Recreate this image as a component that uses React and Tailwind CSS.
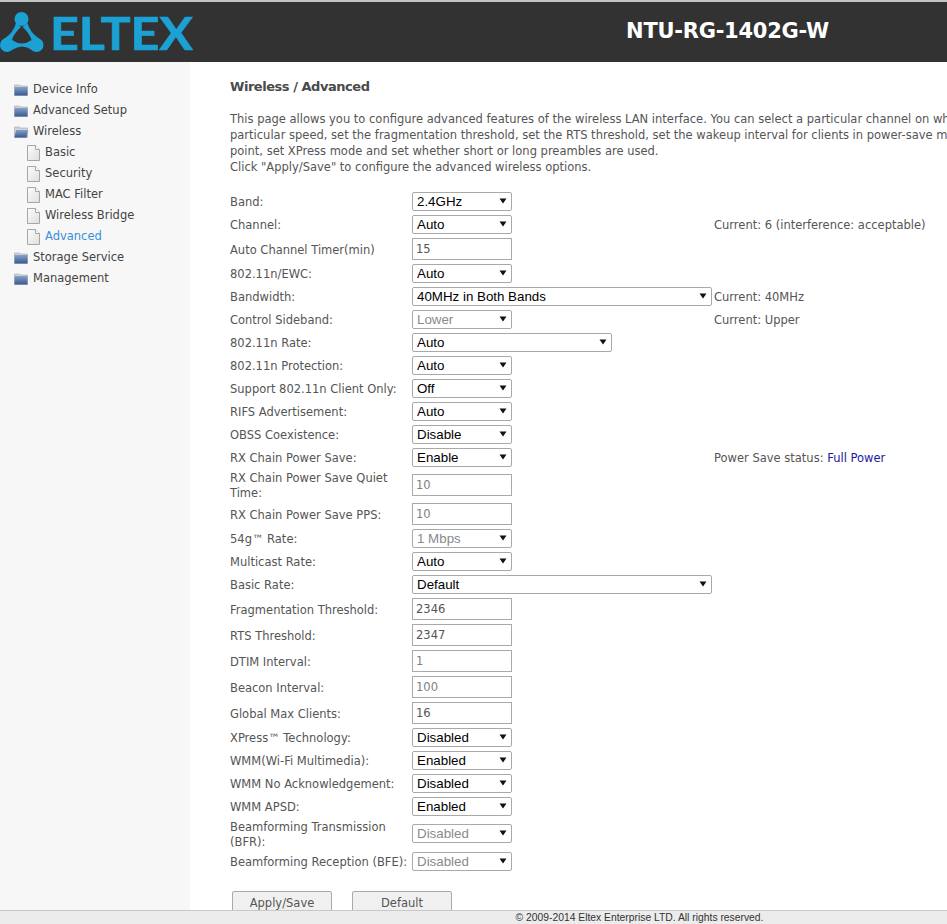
const NAV = [
  { t: "Device Info", k: "folder" },
  { t: "Advanced Setup", k: "folder" },
  { t: "Wireless", k: "open" },
  { t: "Basic", k: "doc" },
  { t: "Security", k: "doc" },
  { t: "MAC Filter", k: "doc" },
  { t: "Wireless Bridge", k: "doc" },
  { t: "Advanced", k: "doc", active: true },
  { t: "Storage Service", k: "folder" },
  { t: "Management", k: "folder" },
];

const ROWS = [
  { l: "Band:", s: "2.4GHz" },
  { l: "Channel:", s: "Auto", n: "Current: 6 (interference: acceptable)" },
  { l: "Auto Channel Timer(min)", i: "15" },
  { l: "802.11n/EWC:", s: "Auto" },
  { l: "Bandwidth:", s: "40MHz in Both Bands", w: "xl", n: "Current: 40MHz" },
  { l: "Control Sideband:", s: "Lower", d: true, n: "Current: Upper" },
  { l: "802.11n Rate:", s: "Auto", w: "lg" },
  { l: "802.11n Protection:", s: "Auto" },
  { l: "Support 802.11n Client Only:", s: "Off" },
  { l: "RIFS Advertisement:", s: "Auto" },
  { l: "OBSS Coexistence:", s: "Disable" },
  { l: "RX Chain Power Save:", s: "Enable", p: true },
  { l: "RX Chain Power Save Quiet Time:", i: "10", d: true, two: true },
  { l: "RX Chain Power Save PPS:", i: "10", d: true },
  { l: "54g™ Rate:", s: "1 Mbps", d: true },
  { l: "Multicast Rate:", s: "Auto" },
  { l: "Basic Rate:", s: "Default", w: "xl" },
  { l: "Fragmentation Threshold:", i: "2346" },
  { l: "RTS Threshold:", i: "2347" },
  { l: "DTIM Interval:", i: "1", d: true },
  { l: "Beacon Interval:", i: "100", d: true },
  { l: "Global Max Clients:", i: "16" },
  { l: "XPress™ Technology:", s: "Disabled" },
  { l: "WMM(Wi-Fi Multimedia):", s: "Enabled" },
  { l: "WMM No Acknowledgement:", s: "Disabled" },
  { l: "WMM APSD:", s: "Enabled" },
  { l: "Beamforming Transmission (BFR):", s: "Disabled", d: true, two: true },
  { l: "Beamforming Reception (BFE):", s: "Disabled", d: true },
];

function Folder({ open }) {
  return (
    <svg width="14" height="12" viewBox="0 0 14 12" className="shrink-0">
      <defs>
        <linearGradient id="fg" x1="0" y1="0" x2="0" y2="1">
          <stop offset="0" stopColor="#86a2cb" />
          <stop offset="1" stopColor="#38598f" />
        </linearGradient>
      </defs>
      <path d="M0.5 1h5l1 1h7v9.5h-13z" fill="#cfd2d6" stroke="#a4a8ae" strokeWidth="0.6" />
      <path d={open ? "M2 4h12l-1.5 7.5h-12z" : "M0.5 3h13v8.5h-13z"} fill="url(#fg)" />
    </svg>
  );
}

function Doc() {
  return (
    <svg width="13" height="16" viewBox="0 0 13 16" className="shrink-0">
      <defs>
        <linearGradient id="dg" x1="0" y1="0" x2="1" y2="1">
          <stop offset="0" stopColor="#fdfdfd" />
          <stop offset="1" stopColor="#dedede" />
        </linearGradient>
      </defs>
      <path d="M0.5 0.5h8l4 4v11h-12z" fill="url(#dg)" stroke="#a6a6a6" />
      <path d="M8.5 0.5v4h4" fill="#fff" stroke="#a6a6a6" />
    </svg>
  );
}

function Select({ value, w, d }) {
  const width = w === "xl" ? "w-[300px]" : w === "lg" ? "w-[200px]" : "w-[100px]";
  return (
    <div className={`relative h-[19px] ${width}`}>
      <select
        disabled={d}
        defaultValue={value}
        className={`h-[19px] w-full appearance-none rounded-[2px] border border-[#a9a9a9] bg-white pl-1 font-['Liberation_Sans',Arial,sans-serif] text-[13.33px] leading-[17px] outline-none ${d ? "text-[#8a8a8a]" : "text-black"}`}
      >
        <option>{value}</option>
      </select>
      <svg width="8" height="6" viewBox="0 0 8 6" className="pointer-events-none absolute right-[5px] top-[6px]">
        <path d="M0.5 0.5h7l-3.5 5z" fill="#111" />
      </svg>
    </div>
  );
}

function Input({ value, d }) {
  return (
    <input
      readOnly
      disabled={d}
      value={value}
      className={`block h-[22px] w-[100px] border border-[#a9a9a9] bg-white pl-[3px] font-['DejaVu_Sans',sans-serif] text-[11.5px] outline-none ${d ? "text-[#808080]" : "text-[#555]"}`}
    />
  );
}

function Row({ r }) {
  const h = r.two ? "min-h-[32px]" : r.i ? "min-h-[26px]" : "min-h-[23px]";
  const label = r.two ? "pt-[2px] leading-[15px]" : r.i ? "pt-[2px] leading-[16px]" : "leading-[16px]";
  const controlShift = r.two && r.s ? "pb-[1px]" : "";
  return (
    <div className={`flex items-center ${h}`}>
      <div className={`w-[182px] shrink-0 ${label}`}>{r.l}</div>
      <div className={`w-[302px] shrink-0 ${controlShift}`}>
        {r.i ? <Input value={r.i} d={r.d} /> : <Select value={r.s} w={r.w} d={r.d} />}
      </div>
      <div className="whitespace-nowrap leading-[16px]">
        {r.n}
        {r.p && (
          <>
            Power Save status: <span className="text-[#1a1a9c]">Full Power</span>
          </>
        )}
      </div>
    </div>
  );
}

export default function App() {
  return (
    <div className="flex h-[924px] w-[947px] flex-col overflow-hidden bg-white font-['DejaVu_Sans',sans-serif] text-[11.5px] text-[#555]">
      <header className="flex h-[62px] shrink-0 items-center justify-between border-t-2 border-[#c4c4c4] bg-[#323232]">
        <svg width="200" height="60" viewBox="0 0 200 60" className="shrink-0">
          <g fill="#1ba1d4">
            <path d="M16 21 Q14 30 4 37 L12 38 Q14 31 21 25 Z" />
            <path d="M27.5 21 Q29.5 30 39.5 37 L31.5 38 Q29.5 31 22.5 25 Z" />
            <path d="M12 38 Q22 45 31.5 38 L32 48 Q22 41 12 48 Z" />
            <circle cx="21.5" cy="17" r="7" />
            <circle cx="7" cy="43" r="7" />
            <circle cx="36.5" cy="43" r="7" />
          </g>
          <text
            x="50"
            y="47.5"
            textLength="143"
            lengthAdjust="spacingAndGlyphs"
            fill="#1ba1d4"
            stroke="#1ba1d4"
            strokeWidth="0.7"
            strokeLinejoin="round"
            fontFamily="Lato, sans-serif"
            fontWeight="700"
            fontSize="46"
          >
            ELTEX
          </text>
        </svg>
        <div className="mr-[118px] font-['DejaVu_Sans',sans-serif] text-[21px] font-bold tracking-[-0.25px] text-white">
          NTU-RG-1402G-W
        </div>
      </header>

      <div className="flex min-h-0 flex-1">
        <nav className="flex w-[190px] shrink-0 flex-col bg-[#f7f7f7] pl-[14px] pt-[17px]">
          {NAV.map((n) => (
            <div key={n.t} className={`flex h-[21px] items-center ${n.k === "doc" ? "gap-[5px] pl-[13px]" : "gap-[5px]"}`}>
              {n.k === "doc" ? <Doc /> : <Folder open={n.k === "open"} />}
              <span className={n.active ? "text-[#3a8fd6]" : "text-[#444]"}>{n.t}</span>
            </div>
          ))}
        </nav>

        <main className="min-w-0 flex-1 pl-[40px] pt-[17px]">
          <h1 className="text-[13px] font-bold leading-[16px] tracking-[-0.46px] text-[#4a4a4a]">Wireless / Advanced</h1>
          <div className="mt-[16px] leading-[16px]">
            <p className="whitespace-nowrap">This page allows you to configure advanced features of the wireless LAN interface. You can select a particular channel on which</p>
            <p className="whitespace-nowrap">particular speed, set the fragmentation threshold, set the RTS threshold, set the wakeup interval for clients in power-save mode,</p>
            <p>point, set XPress mode and set whether short or long preambles are used.</p>
            <p>Click "Apply/Save" to configure the advanced wireless options.</p>
          </div>
          <div className="mt-[15px]">
            {ROWS.map((r) => (
              <Row key={r.l} r={r} />
            ))}
          </div>
          <div className="mt-[18px] flex gap-[20px] pl-[2px]">
            <button className="h-[26px] w-[100px] rounded-[2px] border border-[#a9a9a9] bg-[#f0f0f0] text-[11.5px] text-[#555]">Apply/Save</button>
            <button className="h-[26px] w-[100px] rounded-[2px] border border-[#a9a9a9] bg-[#f0f0f0] text-[11.5px] text-[#555]">Default</button>
          </div>
        </main>
      </div>

      <footer className="relative z-10 flex h-[14px] shrink-0 items-center justify-center border-t border-[#c8c8c8] bg-[#ececec] pl-[332px] font-['Liberation_Sans',Arial,sans-serif] text-[10.33px] text-[#333]">
        © 2009-2014 Eltex Enterprise LTD. All rights reserved.
      </footer>
    </div>
  );
}
